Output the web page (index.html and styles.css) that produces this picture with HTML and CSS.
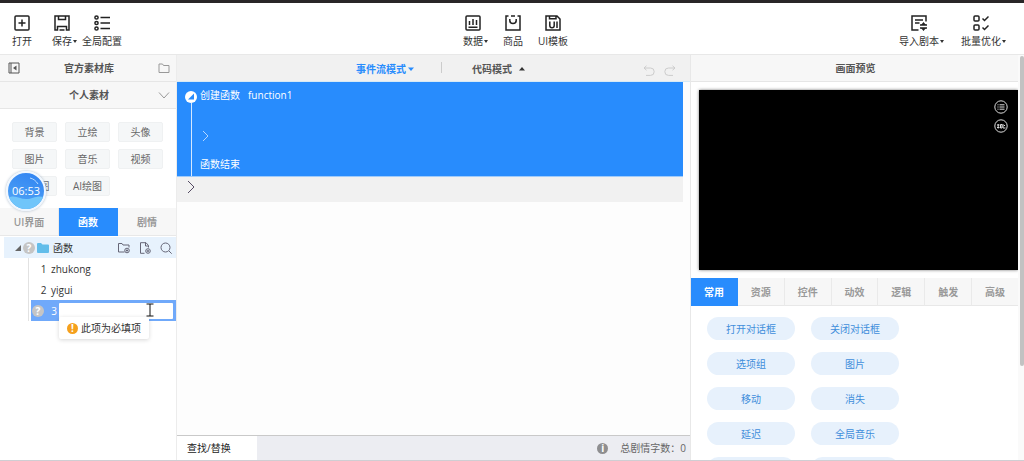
FILE: index.html
```html
<!DOCTYPE html>
<html lang="zh-CN">
<head>
<meta charset="utf-8">
<title>函数编辑器</title>
<link rel="stylesheet" href="styles.css">
</head>
<body>
<header class="toolbar">
  <div class="tool-group">
    <button class="tool"><svg class="tool-icon" viewBox="0 0 16 16"><rect x="1" y="1" width="14" height="14" rx="1"/><path d="M8 4.500v7M4.500 8h7"/></svg><span class="tool-label">打开</span></button>
    <button class="tool"><svg class="tool-icon" viewBox="0 0 16 16"><path d="M1 1h14v14h-2.500v-3.500h-9V15H1zM4.500 1v3.500h7V1M5.500 15h5"/></svg><span class="tool-label caret">保存</span></button>
    <button class="tool"><svg class="tool-icon" viewBox="0 0 16 16"><circle cx="2.500" cy="2.500" r="1.600"/><circle cx="2.500" cy="8" r="1.600"/><circle cx="2.500" cy="13.500" r="1.600"/><path d="M6.500 2.500H16M6.500 8H16M6.500 13.500H16"/></svg><span class="tool-label">全局配置</span></button>
  </div>
  <div class="tool-group">
    <button class="tool"><svg class="tool-icon" viewBox="0 0 16 16"><rect x="1" y="1" width="14" height="14" rx="1"/><path d="M4.500 6v4M8 4v6M11.500 5v5M3.500 12.300h9"/></svg><span class="tool-label caret">数据</span></button>
    <button class="tool"><svg class="tool-icon" viewBox="0 0 16 16"><path d="M3.500 1H1v14h14V1h-2.500M6 1h4M4.800 4v1.500c0 4 6.400 4 6.400 0V4"/></svg><span class="tool-label">商品</span></button>
    <button class="tool"><svg class="tool-icon" viewBox="0 0 16 16"><path d="M1 1h11l3 3v11H1zM4.500 1v2.800H11V1M4.800 6.500v4c0 3 4.400 3 4.400 0v-4M12 6.500v6.500"/></svg><span class="tool-label">UI模板</span></button>
  </div>
  <div class="tool-group tool-group-end">
    <button class="tool tool-wide"><svg class="tool-icon" viewBox="0 0 16 16"><path d="M15 6.500V1H1v14h6.500M4 5h8M4 8h4.500M9 10h7M9 13h7"/><path class="solid" d="M12.500 7l2.500 3h-5zM12.500 16l2.500-3h-5z"/></svg><span class="tool-label caret">导入剧本</span></button>
    <button class="tool tool-wide"><svg class="tool-icon" viewBox="0 0 16 16"><rect x="1" y="1" width="5" height="5" rx="1"/><rect x="1" y="10" width="5" height="5" rx="1"/><path d="M9.500 3.500l2 2L15.500 1.500M9.500 12.500l2 2 4-4"/></svg><span class="tool-label caret">批量优化</span></button>
  </div>
</header>

<main class="workspace">
  <aside class="assets">
    <div class="panel-head">
      <button class="icon-btn" aria-label="收起"><svg class="icon-12" viewBox="0 0 12 12"><path d="M1 1h10v10H1zM3 1v10"/><path class="solid" d="M8.500 3.500v5L5 6z"/></svg></button>
      <span>官方素材库</span>
      <button class="icon-btn" aria-label="文件夹"><svg class="icon-12 thin" viewBox="0 0 12 12"><path d="M1 2h3.500l1 1.500H11v7H1z"/></svg></button>
    </div>
    <div class="panel-head">
      <span class="head-spacer"></span>
      <span>个人素材</span>
      <button class="icon-btn" aria-label="展开"><svg class="icon-12 thin" viewBox="0 0 12 12"><path d="M1 3.500l5 5.500 5-5.500"/></svg></button>
    </div>
    <div class="chips">
      <button class="chip">背景</button><button class="chip">立绘</button><button class="chip">头像</button>
      <button class="chip">图片</button><button class="chip">音乐</button><button class="chip">视频</button>
      <button class="chip">多格图</button><button class="chip">AI绘图</button>
      <div class="timer"><svg class="timer-wave" viewBox="0 0 36 36"><path class="wave" d="M0 25c7-4 11 1 18 1s10-4 18-2v12H0z"/><path class="glint" d="M22 5c4 1 6 3 8 6"/></svg><span class="timer-text">06:53</span></div>
    </div>
    <div class="tabs">
      <button class="tab">UI界面</button><button class="tab active">函数</button><button class="tab">剧情</button>
    </div>
    <div class="tree">
      <div class="tree-root">
        <svg class="icon-6" viewBox="0 0 6 6"><path d="M6 0v6H0z" fill="#666"/></svg>
        <span class="help">?</span>
        <svg class="icon-12 folder" viewBox="0 0 12 12"><path d="M0 2q0-1 1-1h3l1.500 1.500H11q1 0 1 1V10q0 1-1 1H1q-1 0-1-1z"/></svg>
        <span class="tree-name">函数</span>
        <button class="icon-btn" aria-label="新建文件夹"><svg class="icon-12" viewBox="0 0 12 12"><path d="M6.500 10H.5V1.500H4L5 3h6v2.500"/><circle cx="9" cy="8.500" r="2.300"/><path d="M7.800 8.500h2.400M9 7.300v2.400"/></svg></button>
        <button class="icon-btn" aria-label="新建函数"><svg class="icon-12" viewBox="0 0 12 12"><path d="M5.500 11.300h-4V.7H7L9.500 3.500v2M6.500.7V4h3"/><circle cx="9" cy="9" r="2.300"/><path d="M7.800 9h2.400M9 7.800v2.400"/></svg></button>
        <button class="icon-btn" aria-label="搜索"><svg class="icon-12" viewBox="0 0 12 12"><circle cx="5.500" cy="5.500" r="4.500"/><path d="M9 9l2.700 2.700"/></svg></button>
      </div>
      <div class="tree-list">
        <div class="tree-row"><span class="row-num">1</span><span>zhukong</span></div>
        <div class="tree-row"><span class="row-num">2</span><span>yigui</span></div>
        <div class="tree-row selected">
          <span class="help">?</span><label class="row-edit-num" for="fn-name">3</label>
          <input class="row-input" id="fn-name" type="text">
          <svg class="ibeam" viewBox="0 0 8 14"><path d="M.5 1h7M.5 13h7M4 1v12"/></svg>
          <div class="tip" role="alert"><span class="warn">!</span><span>此项为必填项</span></div>
        </div>
      </div>
    </div>
  </aside>

  <section class="editor">
    <div class="editor-head">
      <button class="mode mode-on">事件流模式<svg class="icon-6" viewBox="0 0 6 6"><path d="M0 1.500h6L3 5z"/></svg></button>
      <span class="divider"></span>
      <button class="mode">代码模式<svg class="icon-6" viewBox="0 0 6 6"><path d="M0 4.500h6L3 1z"/></svg></button>
      <div class="history">
        <button class="icon-btn" aria-label="撤销"><svg class="icon-12" viewBox="0 0 12 12"><path d="M3.500.8L1 3l2.500 2.200M1 3h6.500a3.700 3.700 0 0 1 0 7.400H3"/></svg></button>
        <button class="icon-btn" aria-label="重做"><svg class="icon-12" viewBox="0 0 12 12"><path d="M8.500.8L11 3 8.500 5.200M11 3H4.500a3.700 3.700 0 0 0 0 7.400H9"/></svg></button>
      </div>
    </div>
    <div class="flow">
      <div class="block">
        <div class="rail"><svg class="icon-12" viewBox="0 0 12 12"><circle cx="6" cy="6" r="6" fill="#fff"/><path d="M9 2.500v6H3z" fill="#288cfd"/></svg><span class="rail-line"></span></div>
        <div class="block-body">
          <div class="block-line"><span>创建函数</span><span>function1</span></div>
          <div class="block-slot"><svg class="icon-12" viewBox="0 0 12 12"><path d="M3 1l5 5-5 5"/></svg></div>
          <div class="block-line">函数结束</div>
        </div>
      </div>
      <div class="next-line"><svg class="icon-12" viewBox="0 0 12 12"><path d="M1 0l6 6-6 6"/></svg></div>
    </div>
    <footer class="status">
      <button class="find">查找/替换</button>
      <div class="count"><span class="info">i</span><span>总剧情字数：</span><span>0</span></div>
    </footer>
  </section>

  <aside class="preview">
    <div class="panel-head panel-head-center">画面预览</div>
    <div class="stage">
      <button class="stage-btn" aria-label="菜单"><svg viewBox="0 0 14 14"><circle cx="7" cy="7" r="6.200"/><path d="M3.500 4.800h1M3.500 7h1M3.500 9.200h1M5.500 4.800h5M5.500 7h5M5.500 9.200h5"/></svg></button>
      <button class="stage-btn" aria-label="默认"><svg viewBox="0 0 14 14"><circle cx="7" cy="7" r="6.200"/><path d="M3 6h2.500M3 8.500h2.500M4.200 5v4.500M6.500 5.500h1.500v3.500H6.500zM9 5v4h2.500M10 6.500h1"/></svg></button>
    </div>
    <div class="tabs">
      <button class="tab active">常用</button><button class="tab">资源</button><button class="tab">控件</button><button class="tab">动效</button><button class="tab">逻辑</button><button class="tab">触发</button><button class="tab">高级</button>
    </div>
    <div class="actions">
      <button class="pill">打开对话框</button><button class="pill">关闭对话框</button>
      <button class="pill">选项组</button><button class="pill">图片</button>
      <button class="pill">移动</button><button class="pill">消失</button>
      <button class="pill">延迟</button><button class="pill">全局音乐</button>
      <button class="pill" aria-label="更多"></button><button class="pill" aria-label="更多"></button>
    </div>
  </aside>
  <div class="scroll"><div class="scroll-thumb"></div></div>
</main>
</body>
</html>
```

FILE: styles.css
```css
* { box-sizing: border-box; }
body {
  margin: 0;
  height: 100vh;
  display: flex;
  flex-direction: column;
  overflow: hidden;
  border-top: 3px solid #292627;
  border-bottom: 1px solid #cfced3;
  background: #fff;
  color: #333;
  font: 10px/14px "Open Sans", "Noto Sans CJK SC", sans-serif;
}
button {
  margin: 0;
  padding: 0;
  border: 0;
  background: none;
  color: inherit;
  font: inherit;
  white-space: nowrap;
}
svg { display: block; flex: none; fill: none; stroke: currentColor; }

/* Toolbar */
.toolbar {
  flex: none;
  height: 52px;
  padding: 12px 0 0 2px;
  display: grid;
  grid-template-columns: 1fr auto 1fr;
  border-bottom: 1px solid #e8e8e8;
}
.tool-group { display: flex; align-items: flex-start; }
.tool-group-end { justify-content: flex-end; padding-right: 12px; }
.tool { width: 40px; display: flex; flex-direction: column; align-items: center; gap: 3px; }
.tool-wide { width: 62px; }
.tool-icon { width: 16px; height: 16px; stroke-width: 1.5; color: #222; }
.solid { fill: currentColor; stroke: none; }
.tool-label { position: relative; }
.caret::after {
  content: "";
  position: absolute;
  left: 100%;
  top: 6px;
  margin-left: 1px;
  border: 2px solid transparent;
  border-top: 3px solid #333;
  border-bottom: 0;
}

.workspace { flex: 1; min-height: 0; display: flex; overflow: hidden; }

/* Shared parts */
.panel-head {
  flex: none;
  height: 27px;
  padding: 0 6px 0 8px;
  display: flex;
  align-items: center;
  justify-content: space-between;
  border-bottom: 1px solid #e6e6e6;
  background: #f7f7f7;
  color: #555;
  font-weight: 600;
}
.panel-head-center { justify-content: center; }
.head-spacer { width: 12px; }
.icon-btn { display: flex; }
.icon-12 { width: 12px; height: 12px; }
.icon-6 { width: 6px; height: 6px; stroke: none; fill: currentColor; }
.thin { color: #999; }
.tabs { flex: none; height: 28px; display: flex; }
.tab {
  flex: 1;
  border-right: 1px solid #eaeaea;
  border-bottom: 1px solid #e8e8e8;
  background: #f7f7f7;
  color: #999;
  font-weight: 600;
}
.tab:last-child { border-right: 0; }
.tab.active { background: #288cfd; border-color: #288cfd; color: #fff; }
.help {
  width: 12px;
  height: 12px;
  border-radius: 50%;
  background: #c5c5c5;
  color: #fff;
  font-weight: 700;
  line-height: 12px;
  text-align: center;
}

/* Asset panel */
.assets { flex: none; width: 177px; display: flex; flex-direction: column; border-right: 1px solid #ececec; }
.chips {
  position: relative;
  padding: 13px 12px 12px;
  display: grid;
  grid-template-columns: repeat(3, 45px);
  gap: 7px 8px;
}
.chip { height: 20px; border: 1px solid #eff1f2; border-radius: 2px; background: #f5f7f8; color: #666; }
.timer {
  position: absolute;
  left: 6px;
  top: 62px;
  width: 40px;
  height: 40px;
  border: 2px solid #f0f7ff;
  border-radius: 50%;
  overflow: hidden;
  background: linear-gradient(200deg, #2f82f2, #55a8f5);
  box-shadow: 0 0 3px #a9b8c8;
  color: #fff;
}
.timer-wave { width: 36px; height: 36px; stroke: none; }
.wave { fill: #70c5fa; }
.glint { stroke: #b9dcff; }
.timer-text { position: absolute; inset: 0; font-size: 11px; line-height: 36px; text-align: center; }

/* Function tree */
.tree { padding: 1px 0 0 4px; }
.tree-root { height: 21px; padding: 0 4px 0 11px; display: flex; align-items: center; gap: 2px; background: #e7f2fd; }
.tree-root .icon-btn { margin-left: 7px; color: #667; }
.tree-root .folder { fill: #62bdea; stroke: none; }
.tree-name { flex: 1; padding-left: 2px; }
.tree-list { margin-left: 24px; border-left: 1px solid #e2e2e2; }
.tree-row { height: 21px; padding-left: 11px; display: flex; align-items: center; gap: 4px; }
.row-num { width: 7px; text-align: center; }
.tree-row.selected { position: relative; margin-left: 2px; padding: 0 3px 0 1px; gap: 0; background: #70a9fa; color: #fff; }
.row-edit-num { width: 15px; padding-right: 2px; text-align: right; }
.row-input { flex: 1; min-width: 0; height: 16px; padding: 0 4px; border: 0; border-radius: 1px; background: #fff; font: inherit; }
.ibeam { position: absolute; right: 22px; top: 3px; width: 8px; height: 14px; color: #111; }
.tip {
  position: absolute;
  left: 28px;
  top: 17px;
  height: 22px;
  padding: 0 8px;
  display: flex;
  align-items: center;
  gap: 3px;
  border-radius: 2px;
  background: #fff;
  box-shadow: 0 1px 4px rgba(0, 0, 0, 0.16);
  color: #333;
  white-space: nowrap;
}
.warn, .info {
  width: 11px;
  height: 11px;
  border-radius: 50%;
  background: #f5a01c;
  color: #fff;
  font-weight: 700;
  line-height: 11px;
  text-align: center;
}

/* Event flow editor */
.editor { flex: 1; min-width: 0; display: flex; flex-direction: column; background: #fdfdfd; }
.editor-head {
  flex: none;
  position: relative;
  height: 27px;
  padding: 2px 0 0 14px;
  display: flex;
  align-items: center;
  justify-content: center;
  border-bottom: 1px solid #d7eaf5;
  background: #f1f1f1;
}
.mode { display: flex; align-items: center; gap: 7px; color: #555; font-weight: 600; }
.mode-on { gap: 2px; color: #288cfd; }
.mode .icon-6 { color: #333; }
.mode-on .icon-6 { color: #288cfd; }
.divider { width: 1px; height: 11px; margin: 0 30px 4px 27px; background: #ccc; }
.history { position: absolute; right: 14px; top: 10px; display: flex; gap: 9px; color: #ccc; }
.flow { flex: 1; min-height: 0; padding-right: 7px; }
.block { padding-left: 8px; display: flex; gap: 3px; background: #288cfd; border-bottom: 1px solid #9fcbfb; color: #fff; }
.rail { padding-top: 9px; display: flex; flex-direction: column; align-items: center; }
.rail .icon-12 { stroke: none; }
.rail-line { flex: 1; width: 1px; background: #d5e8ff; }
.block-body { flex: 1; padding: 6px 0 5px; }
.block-line { display: flex; gap: 8px; }
.block-slot { height: 55px; padding-top: 28px; color: #b5d7ff; }
.next-line { height: 25px; padding: 4px 10px; background: #f1f1f1; color: #554b63; }
.status { flex: none; height: 25px; display: flex; justify-content: space-between; border-top: 1px solid #c9c9c9; background: #ecedf2; }
.find { width: 80px; padding-left: 10px; background: #fff; color: #222; text-align: left; }
.count { padding-right: 4px; display: flex; align-items: center; color: #666; }
.info { margin-right: 12px; background: #8e8e90; }

/* Preview panel */
.preview { flex: none; width: 328px; display: flex; flex-direction: column; overflow: hidden; border-left: 1px solid #e8e8e8; }
.stage {
  flex: none;
  height: 180px;
  margin: 8px 0 8px 8px;
  padding: 10px 10px 10px 0;
  display: flex;
  flex-direction: column;
  align-items: flex-end;
  gap: 5px;
  background: #000;
  box-shadow: 0 0 3px #777;
}
.stage-btn { width: 14px; height: 14px; color: #ddd; }
.actions { padding: 11px 16px; display: grid; grid-template-columns: 88px 88px; gap: 12px 16px; }
.pill { height: 23px; border-radius: 12px; background: #e7f1fc; color: #3f8edb; }
.scroll { flex: none; width: 6px; padding: 1px 0 0 2px; background: #fafafa; }
.scroll-thumb { height: 310px; border-radius: 2px; background: #c2c2c2; }
```
